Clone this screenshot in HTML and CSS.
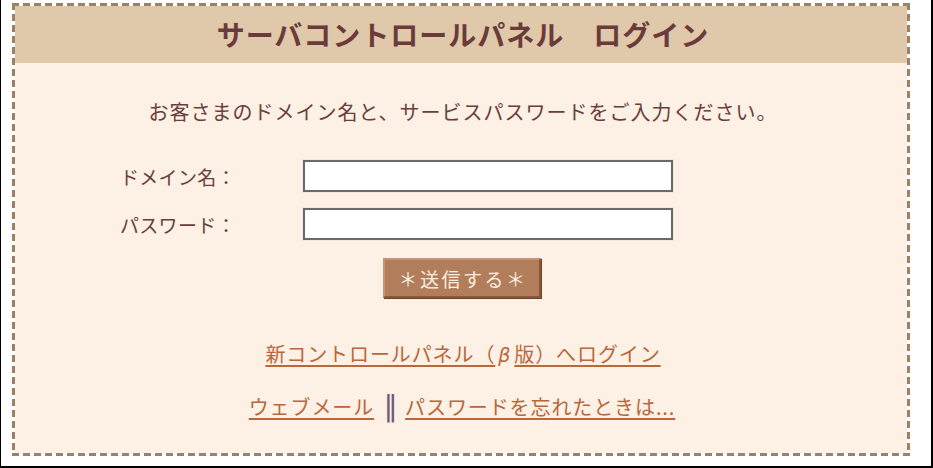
FILE: index.html
```html
<!DOCTYPE html>
<html lang="ja">
<head>
<meta charset="utf-8">
<title>サーバコントロールパネル ログイン</title>
<link rel="stylesheet" href="styles.css">
</head>
<body>
<div class="frame">
  <div class="panel">
    <div class="panel-inner">
      <h1 class="panel-title">サーバコントロールパネル　ログイン</h1>
      <div class="panel-body">
        <p class="lead">お客さまのドメイン名と、サービスパスワードをご入力ください。</p>
        <form class="login-form">
          <div class="row">
            <label class="label" for="domain">ドメイン名：</label>
            <input class="field" id="domain" type="text">
          </div>
          <div class="row">
            <label class="label" for="pass">パスワード：</label>
            <input class="field" id="pass" type="password">
          </div>
          <div class="actions">
            <button class="submit" type="button">＊送信する＊</button>
          </div>
        </form>
        <p class="link-line first"><a href="#" class="link">新コントロールパネル（<span class="beta">β</span>版）へログイン</a></p>
        <p class="link-line second"><a href="#" class="link">ウェブメール</a><span class="sep">‖</span><a href="#" class="link">パスワードを忘れたときは...</a></p>
      </div>
    </div>
  </div>
</div>
</body>
</html>
```
FILE: styles.css
```css
* { box-sizing: border-box; }
html, body { margin: 0; padding: 0; background: #fff; }
body {
  font-family: "Noto Sans CJK JP", "Noto Sans", sans-serif;
  color: #6b3d3d;
}
.frame {
  width: 933px;
  height: 468px;
  border-left: 1px solid #000;
  border-right: 2px solid #000;
  border-bottom: 2px solid #000;
  padding: 3px 0 0 11px;
}
.panel {
  width: 898px;
  height: 453px;
  padding: 3px;
  background:
    linear-gradient(90deg, #9c8166 7px, transparent 7px) left top / 11px 3px repeat-x,
    linear-gradient(90deg, #9c8166 7px, transparent 7px) left bottom / 11px 3px repeat-x,
    linear-gradient(180deg, #9c8166 7px, transparent 7px) left top / 3px 11px repeat-y,
    linear-gradient(180deg, #9c8166 7px, transparent 7px) right top / 3px 11px repeat-y;
}
.panel-inner {
  height: 100%;
  background: #fdf0e4;
}
.panel-title {
  margin: 0;
  height: 57px;
  background: #e0c9aa;
  font-size: 28px;
  font-weight: bold;
  line-height: 57px;
  text-align: center;
  color: #6b3a3a;
  letter-spacing: 1px;
  padding-left: 4px;
}
.panel-body {
  padding-top: 35px;
}
.lead {
  margin: 0 0 34px;
  padding-left: 4px;
  text-align: center;
  font-size: 20px;
  line-height: 28px;
  letter-spacing: 1px;
}
.login-form {
  display: flex;
  flex-direction: column;
  gap: 16px;
}
.row {
  display: grid;
  grid-template-columns: 182px 370px;
  padding-left: 106px;
  align-items: center;
}
.label {
  font-size: 19px;
  letter-spacing: 0.3px;
  margin-left: -1px;
}
.field {
  width: 370px;
  height: 32px;
  border: 2px solid #6a6a6a;
  background: #fff;
  margin: 0;
  box-shadow: 0 0 0 1px #f3e4d4;
}
.actions {
  display: flex;
  justify-content: center;
  margin-top: 2px;
  padding-left: 2px;
}
.submit {
  width: 158px;
  height: 40px;
  margin: 0;
  background: #b27d5a;
  border: 2px solid #8a5838;
  border-top-color: #c99473;
  border-left-color: #c99473;
  box-shadow: 1px 1px 0 #6b4128;
  color: #fbeee2;
  font-family: "Noto Sans CJK JP", sans-serif;
  font-size: 19px;
  letter-spacing: 2.5px;
  padding: 0 0 0 2px;
}
.link-line {
  margin: 0;
  text-align: center;
  font-size: 20px;
  line-height: 24px;
  letter-spacing: 0.9px;
}
.link-line.first { margin-top: 44px; padding-left: 4px; }
.link-line.second { margin-top: 28px; padding-left: 2px; }
.link {
  color: #b9673c;
  text-decoration: underline;
  text-decoration-thickness: 2px;
  text-underline-offset: 3px;
}
.beta {
  display: inline-block;
  width: 1em;
  font-style: italic;
  text-align: center;
  font-family: "DejaVu Sans", sans-serif;
  font-size: 19px;
}
.sep {
  display: inline-block;
  margin: 0 9px 0 11px;
  color: #6e5a78;
  font-family: "DejaVu Sans", sans-serif;
  font-weight: normal;
  font-size: 22px;
  letter-spacing: 0;
  transform: scale(1.25, 1.3);
  transform-origin: center 60%;
}
```
